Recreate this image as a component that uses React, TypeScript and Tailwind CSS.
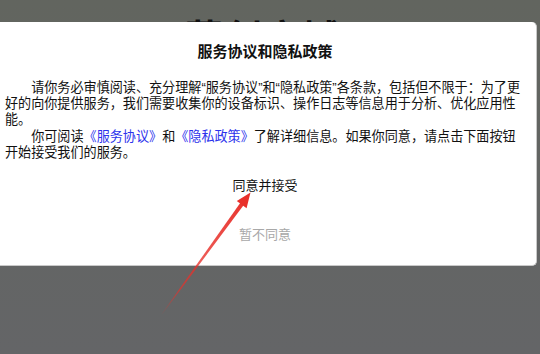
import React from 'react';

const cjk = { fontFamily: '"Liberation Sans", "Noto Sans CJK SC", sans-serif' };

const PolicyDialog: React.FC = () => {
    return (
        <div className="absolute top-[22px] left-0 w-[537px] h-[244px] bg-white rounded-r-[5px] border-r border-b border-[#c9c9c9] flex flex-col">
            {/* Title */}
            <h2 className="pt-[20px] pr-[6px] text-center text-[15px] leading-[20px] font-bold text-[#111]">
                服务协议和隐私政策
            </h2>

            {/* Body - line breaks follow the original dialog */}
            <div className="mt-[18px] pl-[5px] w-[532px] text-[13.1px] leading-[16.2px] text-[#111] whitespace-nowrap">
                <p className="indent-[2em]">
                    请你务必审慎阅读、充分理解“服务协议”和“隐私政策”各条款，包括但不限于：为了更
                    <br />
                    好的向你提供服务，我们需要收集你的设备标识、操作日志等信息用于分析、优化应用性
                    <br />
                    能。
                </p>
                <p className="indent-[2em]">
                    你可阅读<span className="text-[#2c32ec]">《服务协议》</span>和<span className="text-[#2c32ec]">《隐私政策》</span>了解详细信息。如果你同意，请点击下面按钮
                    <br />
                    开始接受我们的服务。
                </p>
            </div>

            {/* Actions */}
            <button className="mt-[15px] pr-[6px] h-[20px] text-center text-[13px] leading-[20px] text-[#111]">
                同意并接受
            </button>
            <button className="mt-[29px] pr-[6px] h-[20px] text-center text-[13px] leading-[20px] text-[#a8a8a8]">
                暂不同意
            </button>
        </div>
    );
};

const Arrow: React.FC = () => (
    <svg className="absolute inset-0 pointer-events-none" width="540" height="354" viewBox="0 0 540 354">
        <defs>
            <linearGradient id="shaft" gradientUnits="userSpaceOnUse" x1="162" y1="314" x2="250" y2="193">
                <stop offset="0" stopColor="#e8302a" stopOpacity="0.05" />
                <stop offset="0.2" stopColor="#e8302a" stopOpacity="0.7" />
                <stop offset="1" stopColor="#e8302a" stopOpacity="1" />
            </linearGradient>
        </defs>
        <polygon points="162.24,314.18 244.1,204.5 240.9,202.1 161.76,313.82" fill="url(#shaft)" />
        <polygon points="250.5,192.5 246.6,208.2 236.8,201.1" fill="#e8302a" />
    </svg>
);

const App: React.FC = () => {
    return (
        <div
            className="relative w-[540px] h-[354px] overflow-hidden bg-gradient-to-b from-[#62655f] to-[#646567]"
            style={cjk}
        >
            {/* Page behind the dialog, only its top edge peeks out */}
            <div className="h-[22px] overflow-hidden">
                <h1
                    className="pt-[17px] pr-[14px] text-center text-[38px] leading-none font-bold text-[#111] tracking-[1px]"
                    style={{ fontFamily: '"Noto Sans CJK SC", sans-serif' }}
                >
                    慕创商城
                </h1>
            </div>

            <PolicyDialog />
            <Arrow />
        </div>
    );
};

export default App;
